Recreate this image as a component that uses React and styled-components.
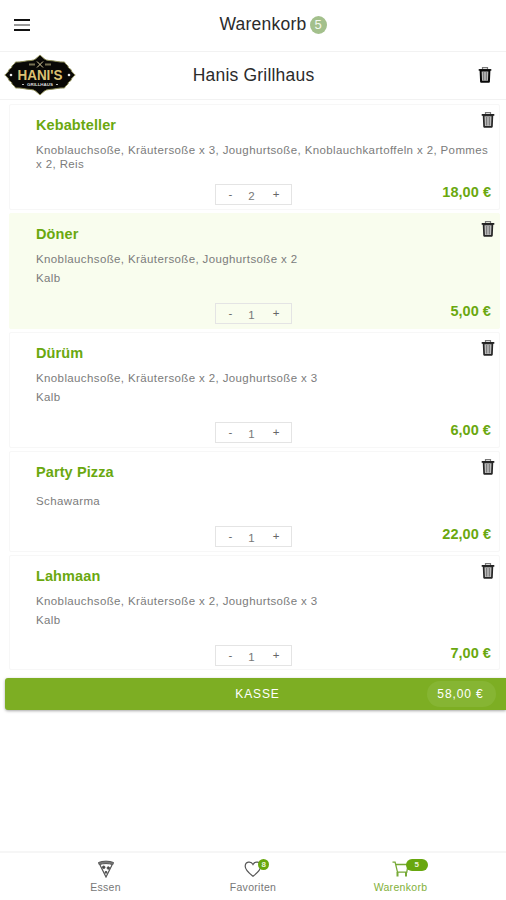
import React from 'react';
import styled, { createGlobalStyle } from 'styled-components';

const GlobalStyle = createGlobalStyle`
  * {
    box-sizing: border-box;
  }
  body {
    margin: 0;
    background: #fff;
    font-family: "Liberation Sans", Arial, sans-serif;
  }
`
const Page = styled.div`
  height: 900px;
  display: flex;
  flex-direction: column;
  overflow: hidden;
`
const Bar = styled.header`
  height: ${({ $height }) => $height}px;
  padding-bottom: 2px;
  display: grid;
  grid-template-columns: 80px 1fr 80px;
  align-items: center;
  border-bottom: 1px solid #f2f2f2;
`
const MenuButton = styled.button`
  width: 16px;
  height: 12px;
  margin-left: 14px;
  padding: 0;
  border: none;
  background: none;
  display: flex;
  flex-direction: column;
  justify-content: space-between;
`
const MenuLine = styled.span`
  height: 2px;
  background: ${({ $light }) => ($light ? '#999' : '#111')};
`
const BarTitle = styled.h1`
  margin: 0;
  display: flex;
  align-items: center;
  justify-content: center;
  gap: 3px;
  font-size: 17.5px;
  font-weight: 400;
  line-height: 20px;
  letter-spacing: ${({ $spacing }) => $spacing}px;
  color: #2b2b2b;
  padding: ${({ $pad }) => $pad || '0'};
`
const CountBadge = styled.span`
  width: 17px;
  height: 18px;
  margin-top: 3px;
  border-radius: 50%;
  background: #a3c08c;
  color: #f4f9ef;
  font-size: 13px;
  line-height: 18px;
  text-align: center;
  letter-spacing: 0;
`
const IconButton = styled.button`
  display: flex;
  justify-self: end;
  padding: 0;
  border: none;
  background: none;
  margin-right: ${({ $right }) => $right || 0}px;
`
const LogoWrap = styled.div`
  display: flex;
  padding-left: 4px;
`
const List = styled.main`
  display: flex;
  flex-direction: column;
  gap: 3px;
  padding: 4px 6px 0 9px;
`
const Card = styled.article`
  display: flex;
  flex-direction: column;
  height: ${({ $height }) => $height}px;
  padding: 12px 8px 4px 26px;
  border: 1px solid ${({ $active }) => ($active ? '#f9fdee' : '#f7f7f7')};
  border-radius: 2px;
  background: ${({ $active }) => ($active ? '#f9fdee' : '#fff')};

  &:last-child {
    padding-bottom: 3px;
  }
`
const CardHead = styled.div`
  display: flex;
  justify-content: space-between;
  height: 24px;
  margin-right: -4px;
`
const Name = styled.h2`
  margin: 0;
  font-size: 14.5px;
  line-height: 17px;
  letter-spacing: 0.1px;
  color: #6aa80f;
`
const TrashWrap = styled.div`
  margin-top: -6px;
`
const Detail = styled.p`
  margin: ${({ $top }) => $top || 0}px 0 0;
  font-size: 11.5px;
  line-height: 14px;
  letter-spacing: 0.38px;
  color: #7b7b7b;
`
const CardFoot = styled.div`
  display: grid;
  grid-template-columns: 179px 77px 1fr;
  align-items: center;
  margin-top: auto;
  height: 22px;
`
const Stepper = styled.div`
  display: grid;
  grid-template-columns: 1fr 1fr 1fr;
  align-items: center;
  height: 21px;
  padding: 0 4px 0 3px;
  border: 1px solid #e4e4e4;
  font-size: 11.5px;
  line-height: 16px;
  color: #666;
  text-align: center;
`
const Step = styled.span`
  padding-left: ${({ $left }) => $left || 0}px;
`
const Amount = styled.span`
  padding: 3px 3px 0 0;
  color: #777;
`
const Price = styled.strong`
  justify-self: end;
  margin-bottom: 5px;
  font-size: 14.5px;
  line-height: 16px;
  letter-spacing: 0.05px;
  color: #6aa80f;
`
const Checkout = styled.button`
  display: grid;
  grid-template-columns: 1fr 69px;
  align-items: center;
  height: 32px;
  margin: 8px 0 0 5px;
  padding: 0 10px 0 83px;
  border: none;
  border-radius: 3px 0 0 3px;
  background: #7dae23;
  box-shadow: 0 1px 3px rgba(0, 0, 0, 0.35);
  color: #fff;
  font-family: "Liberation Sans", Arial, sans-serif;
  font-size: 12px;
  letter-spacing: 0.9px;
`
const Total = styled.span`
  height: 26px;
  padding-right: 2px;
  border-radius: 13px;
  background: #86b533;
  line-height: 26px;
  letter-spacing: 0.9px;
`
const Tabs = styled.nav`
  display: flex;
  justify-content: center;
  height: 49px;
  margin-top: auto;
  border-top: 2px solid #f6f6f6;
`
const Tab = styled.div`
  position: relative;
  width: 147.5px;
  padding-top: 7px;
  display: flex;
  flex-direction: column;
  align-items: center;
  gap: 3px;
  color: ${({ $active }) => ($active ? '#83b03a' : '#777')};
  font-size: 10.5px;
  line-height: 13px;
  letter-spacing: 0.3px;
`
const TabBadge = styled.span`
  position: absolute;
  top: 6px;
  left: 79px;
  width: ${({ $wide }) => ($wide ? 22 : 11)}px;
  height: ${({ $wide }) => ($wide ? 12 : 11)}px;
  border-radius: 6px;
  background: #68a70f;
  color: #e8f3d9;
  font-size: 8px;
  font-weight: 700;
  line-height: 11px;
  text-align: center;
  letter-spacing: 0;
`

const Trash = ({ bold }) => (
  <svg width="14" height="18" viewBox="0 0 14 18">
    <path d="M4.500 3.200V1.700h5v1.500" fill="none" stroke="#777" strokeWidth="1.200" />
    <path d="M.7 3h12.600v1.800H.7z" fill="#222" />
    <path
      d="M2.600 4.500h8.800l-.5 11.300H3.100z"
      fill="#bbb"
      stroke={bold ? '#080808' : '#252525'}
      strokeWidth={bold ? 2 : 1.700}
      strokeLinejoin="round"
    />
    <path d="M5.700 6v8.500M8.300 6v8.500" stroke="#666" strokeWidth="0.900" />
  </svg>
)

const Logo = () => (
  <svg width="72" height="42" viewBox="0 0 72 42">
    <path
      d="M.8 21c1.700-2 4-3 4.200-5.500C6.500 14.500 8 14 8 12c1-1.500 3-2 3.500-4C17 8.500 22 6.500 27 6.500c4 0 6-3 9-5.500 3 2.500 5 5.500 9 5.500 5 0 10 2 15.500 1.500.5 2 2.500 2.500 3.500 4 0 2 1.500 2.500 3 3.500.2 2.500 2.500 3.500 4.200 5.500-1.700 2-4 3-4.200 5.500-1.500 1-3 1.500-3 3.500-1 1.500-3 2-3.500 4C55 33.500 50 35.500 45 35.500c-4 0-6 3-9 5.500-3-2.500-5-5.500-9-5.500-5 0-10-2-15.500-1.500-.5-2-2.500-2.500-3.500-4 0-2-1.500-2.500-3-3.500C4.800 24 2.500 23 .8 21z"
      fill="#090806"
      stroke="#8c8b55"
      strokeWidth="1"
    />
    <path d="M33 7.500l6 6M39 7.500l-6 6" stroke="#d6c99b" strokeWidth="1" />
    <path d="M25 10.500h6M41 10.500h6" stroke="#777052" strokeWidth="2" />
    <circle cx="7" cy="21" r="1.300" fill="#eee" />
    <circle cx="65" cy="21" r="1.300" fill="#eee" />
    <text x="36" y="26" textAnchor="middle" textLength="45" lengthAdjust="spacingAndGlyphs" fontSize="14" fontWeight="700" fill="#dcc273">
      HANI'S
    </text>
    <text x="36" y="32" textAnchor="middle" textLength="26" lengthAdjust="spacingAndGlyphs" fontSize="4" fontWeight="700" fill="#ddd">
      GRILLHAUS
    </text>
    <path d="M18 30.500h2M52 30.500h2" stroke="#bbb" strokeWidth="1" />
  </svg>
)

const Pizza = () => (
  <svg width="18" height="18" viewBox="0 0 18 18" fill="none" stroke="#555">
    <path d="M1.500 2.500c4-1.800 11-1.800 15 0l-.7 2.200c-4-1.500-9.600-1.500-13.600 0z" fill="#777" />
    <path d="M3 5l6 12 6-12" strokeWidth="1.200" />
    <circle cx="6.700" cy="7.300" r="1.300" fill="#444" />
    <circle cx="11.300" cy="8" r="1.200" fill="#444" />
    <circle cx="9" cy="12.300" r="1" fill="#444" />
  </svg>
)

const Heart = () => (
  <svg width="18" height="18" viewBox="0 0 18 18" fill="none" stroke="#555" strokeWidth="1.200">
    <path d="M9 16.300C6.500 14.300 1.200 10.500 1.200 6.300 1.200 1.300 7.200.8 9 4.500 10.800.8 16.800 1.300 16.800 6.300c0 4.200-5.300 8-7.800 10z" />
  </svg>
)

const Cart = () => (
  <svg width="18" height="18" viewBox="0 0 18 18" fill="none" stroke="#76a936" strokeWidth="1.300">
    <path d="M.5 2.200h2.600L5.500 12.200h10M4 4.500h12l-1.200 7.700" />
    <path d="M5.500 12v4.500M14 12v4.500" strokeWidth="2" />
  </svg>
)

const items = [
  {
    name: 'Kebabteller',
    extras: 'Knoblauchsoße, Kräutersoße x 3, Joughurtsoße, Knoblauchkartoffeln x 2, Pommes x 2, Reis',
    amount: 2,
    price: '18,00 €',
    height: 106,
  },
  { name: 'Döner', extras: 'Knoblauchsoße, Kräutersoße, Joughurtsoße x 2', meta: 'Kalb', amount: 1, price: '5,00 €', height: 116, active: true },
  { name: 'Dürüm', extras: 'Knoblauchsoße, Kräutersoße x 2, Joughurtsoße x 3', meta: 'Kalb', amount: 1, price: '6,00 €', height: 116 },
  { name: 'Party Pizza', meta: 'Schawarma', amount: 1, price: '22,00 €', height: 101 },
  { name: 'Lahmaan', extras: 'Knoblauchsoße, Kräutersoße x 2, Joughurtsoße x 3', meta: 'Kalb', amount: 1, price: '7,00 €', height: 115 },
]

const CartItem = ({ item }) => {
  return (
    <Card $height={item.height} $active={item.active}>
      <CardHead>
        <Name>{item.name}</Name>
        <TrashWrap>
          <IconButton><Trash /></IconButton>
        </TrashWrap>
      </CardHead>
      {item.extras && <Detail $top={2}>{item.extras}</Detail>}
      {item.meta && <Detail $top={item.extras ? 4.5 : 6}>{item.meta}</Detail>}
      <CardFoot>
        <span />
        <Stepper>
          <Step>-</Step>
          <Amount>{item.amount}</Amount>
          <Step $left={1}>+</Step>
        </Stepper>
        <Price>{item.price}</Price>
      </CardFoot>
    </Card>
  )
}

export default function App() {
  return (
    <>
      <GlobalStyle />
      <Page>
        <Bar $height={52}>
          <MenuButton>
            <MenuLine />
            <MenuLine $light />
            <MenuLine />
          </MenuButton>
          <BarTitle $spacing={0.25} $pad="0 0 2px 40px">
            Warenkorb
            <CountBadge>5</CountBadge>
          </BarTitle>
        </Bar>
        <Bar $height={48}>
          <LogoWrap><Logo /></LogoWrap>
          <BarTitle $spacing={0.2} $pad="0 0 0 1px">Hanis Grillhaus</BarTitle>
          <IconButton $right={14}><Trash bold /></IconButton>
        </Bar>
        <List>
          {items.map((item) => (
            <CartItem key={item.name} item={item} />
          ))}
        </List>
        <Checkout>
          <span>KASSE</span>
          <Total>58,00 €</Total>
        </Checkout>
        <Tabs>
          <Tab>
            <Pizza />
            Essen
          </Tab>
          <Tab>
            <Heart />
            <TabBadge>8</TabBadge>
            Favoriten
          </Tab>
          <Tab $active>
            <Cart />
            <TabBadge $wide>5</TabBadge>
            Warenkorb
          </Tab>
        </Tabs>
      </Page>
    </>
  )
}
